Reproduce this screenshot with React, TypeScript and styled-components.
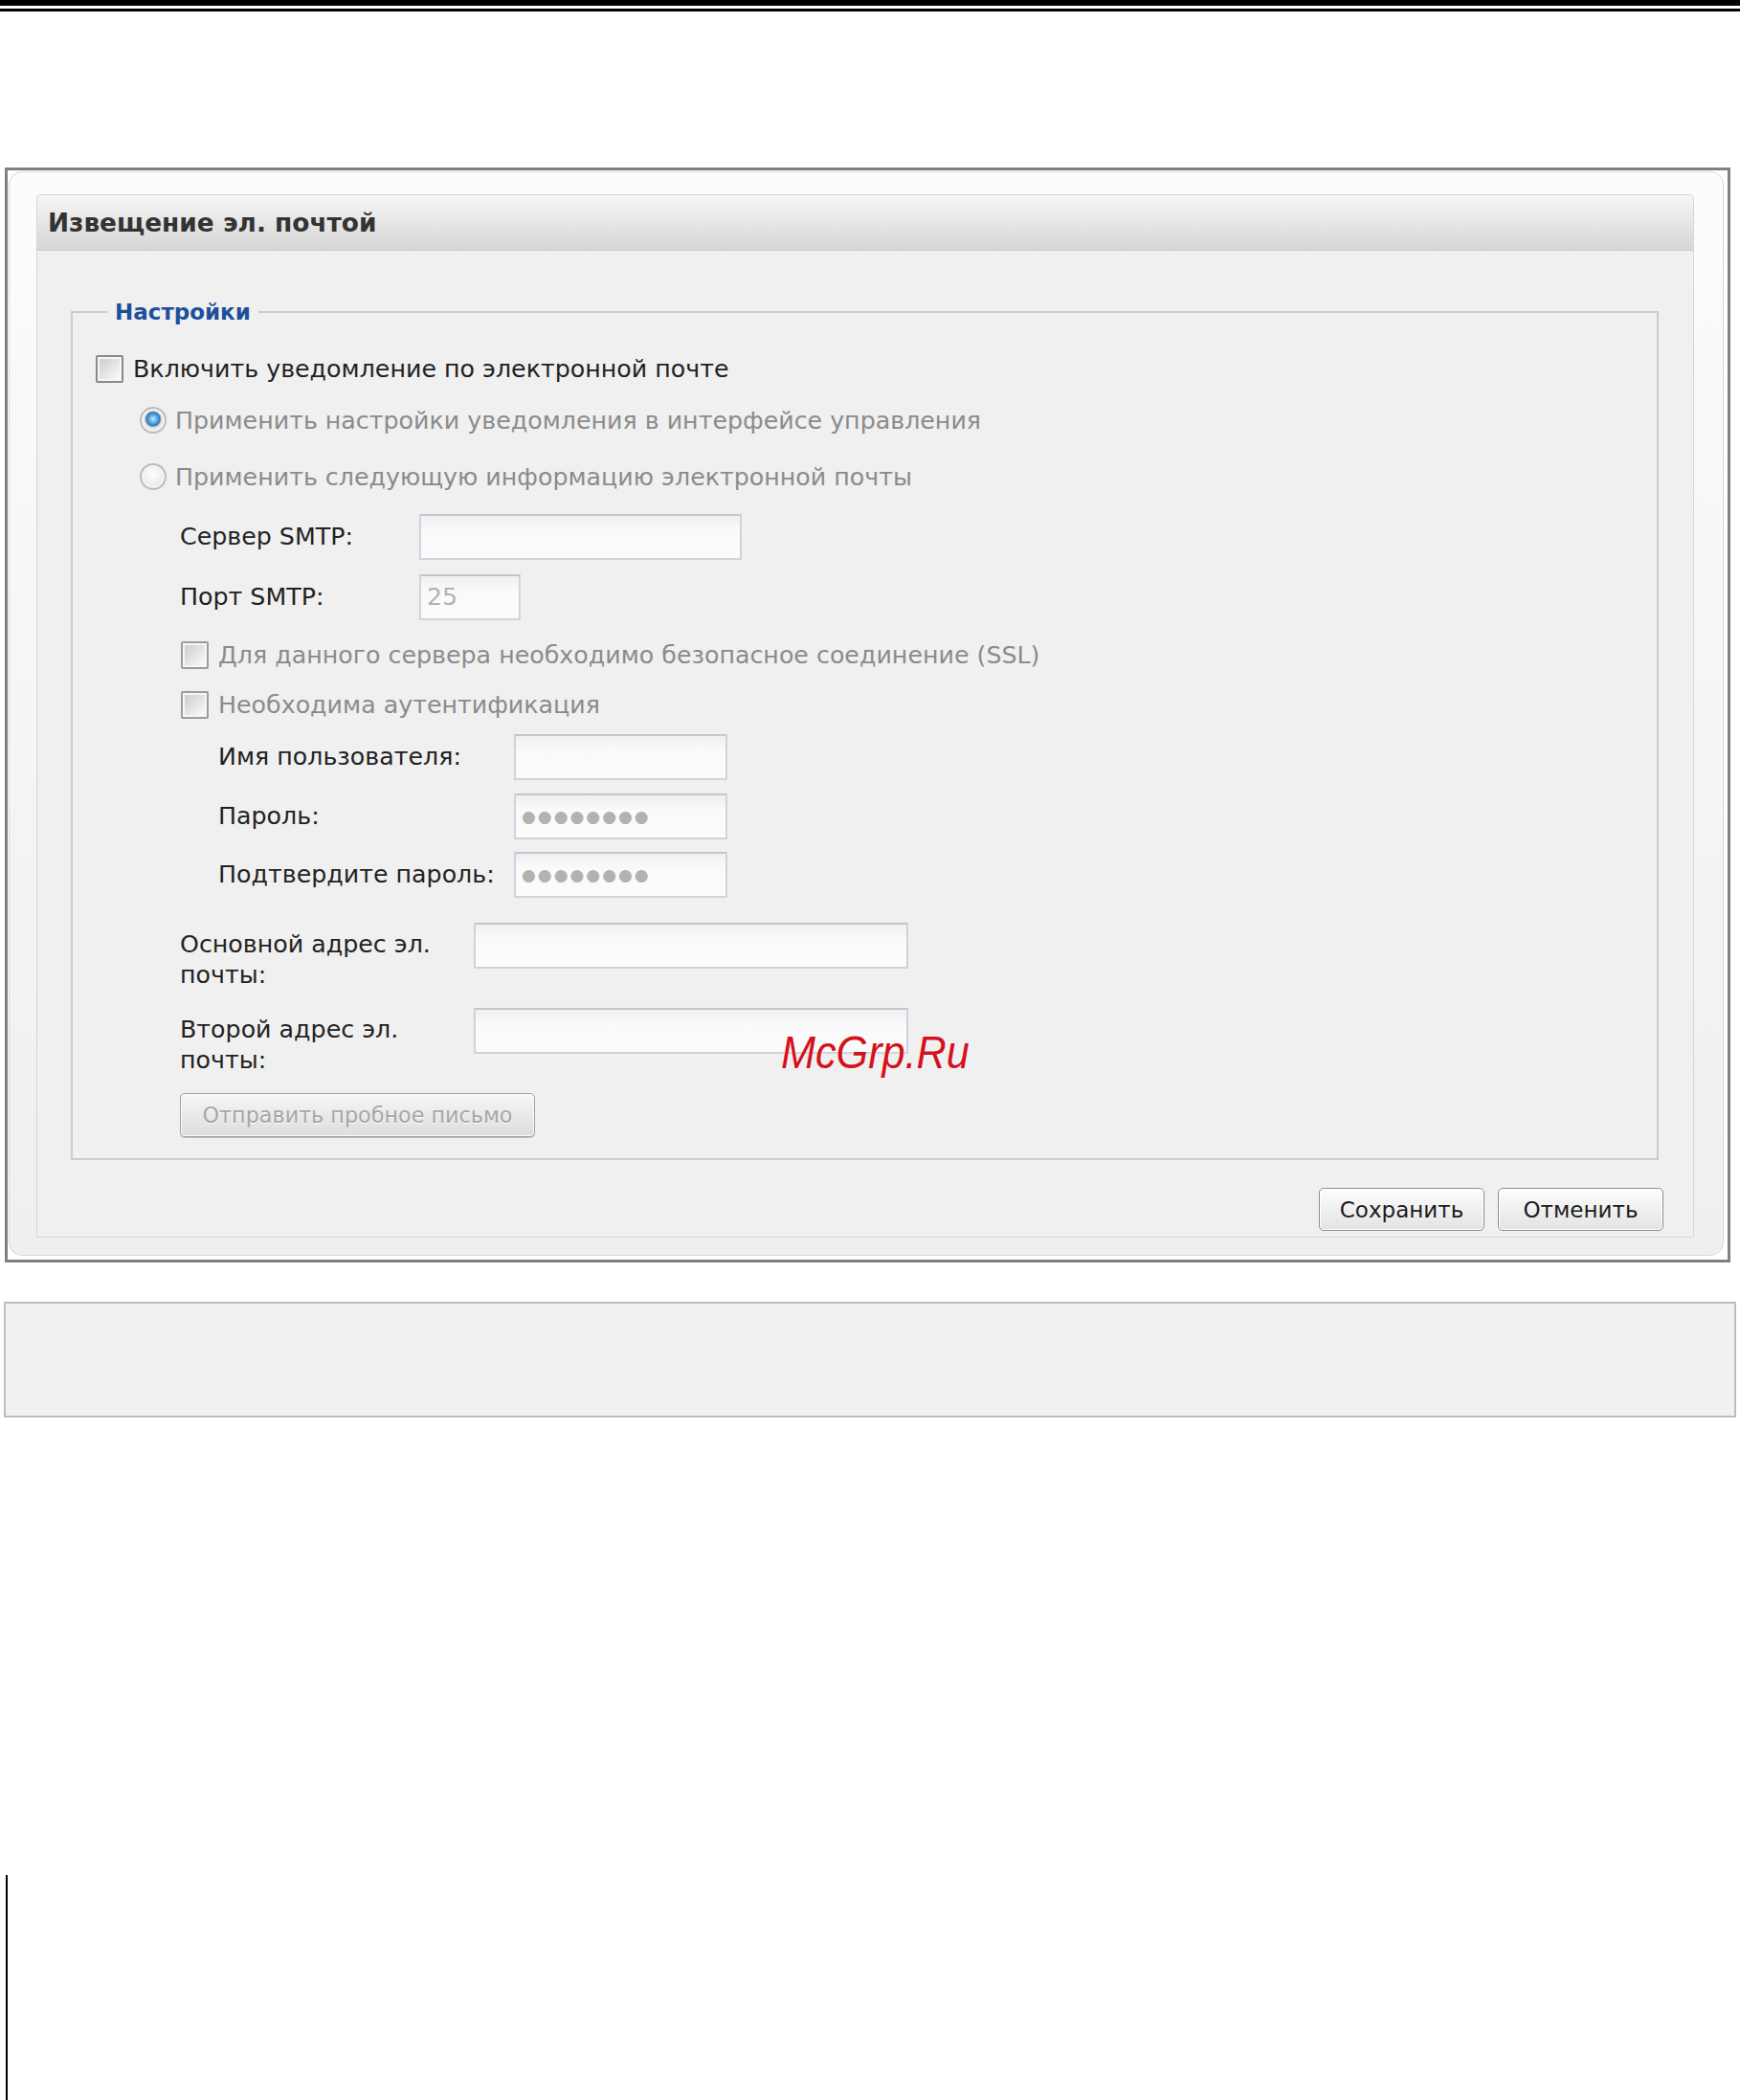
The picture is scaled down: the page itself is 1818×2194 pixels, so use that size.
import React from "react";
import styled, { createGlobalStyle } from "styled-components";

const Global = createGlobalStyle`
  html, body { margin: 0; padding: 0; background: #ffffff; }
  body { font-family: "DejaVu Sans", Verdana, sans-serif; }
  * { box-sizing: border-box; }
`;

const Page = styled.div`
  position: relative;
  height: 2194px;
  overflow: hidden;
`;

const TopRule = styled.div`
  height: 12px;
  border-top: 6px solid #000;
  border-bottom: 3px solid #000;
`;

const Window = styled.div`
  margin: 163px 10px 0 5px;
  border: 3px solid #808080;
`;

const Frame = styled.div`
  margin: 1px 4px 4px 1px;
  border: 1px solid #d7d7d7;
  border-radius: 14px;
  background: linear-gradient(to bottom, #fcfcfc, #efefef);
  padding: 23px 30px 18px 28px;
`;

const Dialog = styled.section`
  border: 1px solid #d6d6d6;
  border-radius: 4px 4px 0 0;
  background: #f0f0f0;
`;

const Header = styled.header`
  height: 58px;
  display: flex;
  align-items: center;
  padding-left: 11px;
  background: linear-gradient(to bottom, #f6f6f6, #d6d6d6);
  border-bottom: 1px solid #cbcbcb;
  border-radius: 3px 3px 0 0;
`;

const Title = styled.h1`
  margin: 0;
  font-size: 26.4px;
  font-weight: bold;
  color: #333333;
`;

const Body = styled.div`
  padding: 49px 36px 0 35px;
`;

const Fieldset = styled.fieldset`
  margin: 0;
  min-width: 0;
  padding: 29px 24px 22px;
  border: 2px solid #c9cbd9;
`;

const Legend = styled.legend`
  margin-left: 12px;
  padding: 0 8px;
  font-size: 23px;
  line-height: 30px;
  font-weight: bold;
  color: #1d4f9c;
`;

const Row = styled.div<{ $top?: number; $h: number; $indent?: number; $topAlign?: boolean }>`
  display: flex;
  align-items: ${(p) => (p.$topAlign ? "flex-start" : "center")};
  margin-top: ${(p) => p.$top ?? 0}px;
  height: ${(p) => p.$h}px;
  padding-left: ${(p) => p.$indent ?? 0}px;
`;

const Text = styled.span<{ $muted?: boolean; $gap?: number }>`
  margin-left: ${(p) => p.$gap ?? 10}px;
  font-size: 25.3px;
  white-space: nowrap;
  color: ${(p) => (p.$muted ? "#8b8b8b" : "#222222")};
`;

const Label = styled.span<{ $w: number; $pad?: number; $wrap?: boolean }>`
  flex: none;
  width: ${(p) => p.$w}px;
  padding-top: ${(p) => p.$pad ?? 0}px;
  padding-right: ${(p) => (p.$wrap ? 30 : 0)}px;
  font-size: 25.3px;
  line-height: 32px;
  white-space: ${(p) => (p.$wrap ? "normal" : "nowrap")};
  color: #222222;
`;

const Check = styled.span<{ $dim?: boolean }>`
  flex: none;
  width: 29px;
  height: 29px;
  border: 2px solid ${(p) => (p.$dim ? "#9d9d9d" : "#8a8a8a")};
  border-radius: 2px;
  box-shadow: inset 0 0 0 2px #f6f6f6;
  background: linear-gradient(135deg, #c9c9c9, #f6f6f6 85%);
`;

const Radio = styled.span<{ $on?: boolean }>`
  flex: none;
  width: 28px;
  height: 28px;
  border-radius: 50%;
  border: 2px solid #bcbcbc;
  box-shadow: inset 0 0 0 2px #f4f4f4;
  background: ${(p) =>
    p.$on
      ? "radial-gradient(circle at 50% 45%, #c6ecff 0, #5fb0e6 4px, #2f78b8 7px, #9ab4c8 8px, #e4e4e4 9px, #f7f7f7 100%)"
      : "radial-gradient(circle at 50% 40%, #ffffff, #dedede)"};
`;

const Field = styled.input<{ $w: number; $dots?: boolean }>`
  flex: none;
  width: ${(p) => p.$w}px;
  height: 48px;
  padding: 0 6px;
  border: 2px solid #d0d2de;
  border-top-color: #c3c5d2;
  border-radius: 1px;
  background: linear-gradient(to bottom, #f0f0f0, #fafafa 35%, #fbfbfb);
  font-family: "DejaVu Sans", Verdana, sans-serif;
  font-size: ${(p) => (p.$dots ? 17 : 25.3)}px;
  letter-spacing: ${(p) => (p.$dots ? 2 : 0)}px;
  color: #b2b2b2;
  outline: none;
`;

const TestButton = styled.button`
  width: 371px;
  height: 46px;
  padding: 0;
  border: 1px solid #a0a0a0;
  border-radius: 5px;
  box-shadow: inset 0 0 0 1px #fbfbfb, 0 1px 0 #bdbdbd;
  background: linear-gradient(to bottom, #f6f6f6, #dddddd);
  font-family: "DejaVu Sans", Verdana, sans-serif;
  font-size: 22.3px;
  color: #a6a6a6;
  text-shadow: 0 1px 0 #ffffff;
`;

const Footer = styled.div`
  display: flex;
  justify-content: flex-end;
  gap: 14px;
  padding: 29px 31px 6px 0;
`;

const ActionButton = styled.button`
  width: 173px;
  height: 45px;
  padding: 0;
  border: 1px solid #8e8e8e;
  border-radius: 5px;
  box-shadow: inset 0 0 0 1px #ffffff;
  background: linear-gradient(to bottom, #fdfdfd, #e3e3e3);
  font-family: "DejaVu Sans", Verdana, sans-serif;
  font-size: 23px;
  color: #1c1c1c;
`;

const SecondBox = styled.div`
  margin: 41px 4px 0 4px;
  height: 121px;
  border: 2px solid #bdbdbd;
  background: #f1f1f1;
`;

const SideLine = styled.div`
  margin: 478px 0 0 6px;
  width: 2px;
  height: 235px;
  background: #000;
`;

const Watermark = styled.div`
  position: absolute;
  left: 816px;
  top: 1076px;
  font-family: "Liberation Sans", Arial, sans-serif;
  font-style: italic;
  font-size: 48px;
  line-height: 1;
  color: #d3121b;
  text-shadow: 0 0 2px #ffffff;
  transform: scaleX(0.9);
  transform-origin: left center;
`;

export default function App() {
  return (
    <Page>
      <Global />
      <TopRule />
      <Window>
        <Frame>
          <Dialog>
            <Header>
              <Title>Извещение эл. почтой</Title>
            </Header>
            <Body>
              <Fieldset>
                <Legend>Настройки</Legend>
                <Row $h={30}>
                  <Check />
                  <Text>Включить уведомление по электронной почте</Text>
                </Row>
                <Row $top={25} $h={28} $indent={46}>
                  <Radio $on />
                  <Text $muted $gap={9}>
                    Применить настройки уведомления в интерфейсе управления
                  </Text>
                </Row>
                <Row $top={31} $h={28} $indent={46}>
                  <Radio />
                  <Text $muted $gap={9}>
                    Применить следующую информацию электронной почты
                  </Text>
                </Row>
                <Row $top={25} $h={48} $indent={88}>
                  <Label $w={250}>Сервер SMTP:</Label>
                  <Field $w={337} readOnly defaultValue="" />
                </Row>
                <Row $top={14} $h={49} $indent={88}>
                  <Label $w={250}>Порт SMTP:</Label>
                  <Field $w={106} readOnly defaultValue="25" />
                </Row>
                <Row $top={22} $h={28} $indent={89}>
                  <Check $dim />
                  <Text $muted>Для данного сервера необходимо безопасное соединение (SSL)</Text>
                </Row>
                <Row $top={24} $h={28} $indent={89}>
                  <Check $dim />
                  <Text $muted>Необходима аутентификация</Text>
                </Row>
                <Row $top={17} $h={48} $indent={128}>
                  <Label $w={309}>Имя пользователя:</Label>
                  <Field $w={223} readOnly defaultValue="" />
                </Row>
                <Row $top={14} $h={48} $indent={128}>
                  <Label $w={309}>Пароль:</Label>
                  <Field $w={223} $dots readOnly defaultValue="●●●●●●●●" />
                </Row>
                <Row $top={13} $h={48} $indent={128}>
                  <Label $w={309}>Подтвердите пароль:</Label>
                  <Field $w={223} $dots readOnly defaultValue="●●●●●●●●" />
                </Row>
                <Row $top={26} $h={72} $indent={88} $topAlign>
                  <Label $w={307} $pad={7} $wrap>
                    Основной адрес эл. почты:
                  </Label>
                  <Field $w={454} readOnly defaultValue="" />
                </Row>
                <Row $top={17} $h={72} $indent={88} $topAlign>
                  <Label $w={307} $pad={7} $wrap>
                    Второй адрес эл. почты:
                  </Label>
                  <Field $w={454} readOnly defaultValue="" />
                </Row>
                <Row $top={17} $h={46} $indent={88}>
                  <TestButton type="button">Отправить пробное письмо</TestButton>
                </Row>
              </Fieldset>
            </Body>
            <Footer>
              <ActionButton type="button">Сохранить</ActionButton>
              <ActionButton type="button">Отменить</ActionButton>
            </Footer>
          </Dialog>
        </Frame>
      </Window>
      <SecondBox />
      <SideLine />
      <Watermark>McGrp.Ru</Watermark>
    </Page>
  );
}
